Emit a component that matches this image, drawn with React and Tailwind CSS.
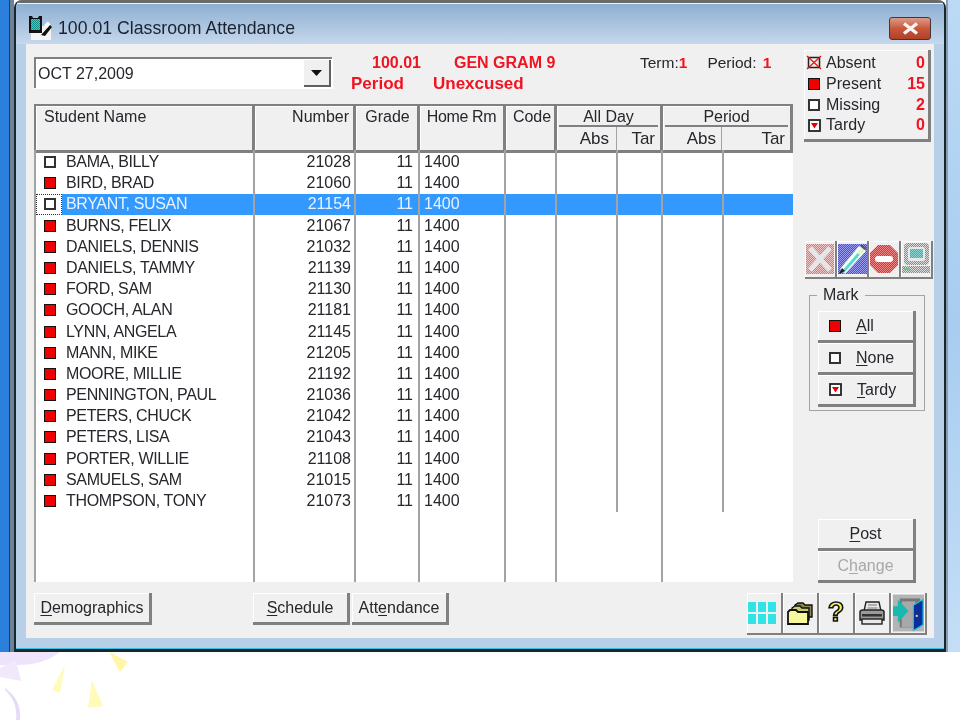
import React from "react";

const students = [
  ["BAMA, BILLY", "21028", "w"],
  ["BIRD, BRAD", "21060", "r"],
  ["BRYANT, SUSAN", "21154", "w"],
  ["BURNS, FELIX", "21067", "r"],
  ["DANIELS, DENNIS", "21032", "r"],
  ["DANIELS, TAMMY", "21139", "r"],
  ["FORD, SAM", "21130", "r"],
  ["GOOCH, ALAN", "21181", "r"],
  ["LYNN, ANGELA", "21145", "r"],
  ["MANN, MIKE", "21205", "r"],
  ["MOORE, MILLIE", "21192", "r"],
  ["PENNINGTON, PAUL", "21036", "r"],
  ["PETERS, CHUCK", "21042", "r"],
  ["PETERS, LISA", "21043", "r"],
  ["PORTER, WILLIE", "21108", "r"],
  ["SAMUELS, SAM", "21015", "r"],
  ["THOMPSON, TONY", "21073", "r"],
];

const COLS = "grid grid-cols-[221px_101px_64px_86px_51px_61px_45px_61px_69px]";
const LINE = "border-r-2 border-[#a3a3a3]";

function Present() {
  return <span className="block w-[12px] h-[12px] border border-[#111] bg-[#f00000]" />;
}
function Missing() {
  return <span className="block w-[12px] h-[12px] border-2 border-[#333] bg-white" />;
}
function Tardy() {
  return (
    <svg width="13" height="13" viewBox="0 0 13 13" className="block">
      <rect x="1" y="1" width="11" height="11" fill="#fff" stroke="#222" strokeWidth="1.8" />
      <path d="M3 4h7l-3.5 5.5z" fill="#e80000" />
    </svg>
  );
}
function Absent() {
  return (
    <svg width="16" height="17" viewBox="0 0 16 17" className="block">
      <rect x="2.5" y="3.5" width="11" height="10" fill="#f5e9e9" stroke="#222" strokeWidth="1.5" />
      <path d="M1 2l14 13M15 2L1 15" stroke="#e01010" strokeWidth="1.1" />
    </svg>
  );
}

function StudentRow({ name, num, mark, selected }) {
  const bg = selected ? "bg-[#3399ff] text-[#e8f3ff]" : "text-[#26262c]";
  return (
    <div className={`${COLS} ${selected ? "h-[20.19px] mt-[1px] leading-[20px]" : "h-[21.19px] leading-[22px]"}`}>
      <div className={`flex border-l-2 border-[#808080] ${LINE}`}>
        <div className={`w-[26px] flex items-center justify-center pl-[1px] ${selected ? "border border-dotted border-[#333]" : ""}`}>
          {mark === "r" ? <Present /> : <Missing />}
        </div>
        <div className={`flex-1 pl-[4px] tracking-[-0.35px] ${bg}`}>{name}</div>
      </div>
      <div className={`${LINE} text-right pr-[3px] ${bg}`}>{num}</div>
      <div className={`${LINE} text-right pr-[5px] ${bg}`}>11</div>
      <div className={`${LINE} pl-[4px] ${bg}`}>1400</div>
      <div className={`${LINE} ${bg}`} />
      <div className={`${LINE} ${bg}`} />
      <div className={`${LINE} ${bg}`} />
      <div className={`${LINE} ${bg}`} />
      <div className={`${selected ? bg : ""}`} />
    </div>
  );
}

const HEAD = "bg-[#f0f0f0] border-r-[3px] border-b-[3px] border-[#808080] shadow-[inset_1px_1px_0_#fff] leading-[22px]";

function Btn({ className = "", children }) {
  return (
    <div className={`flex items-center bg-[#f0f0f0] border-r-[3px] border-b-[3px] border-[#808080] shadow-[inset_1px_1px_0_#fff] ${className}`}>
      {children}
    </div>
  );
}

function IconBtn({ className = "", children }) {
  return (
    <div className={`flex items-center justify-center bg-[#f0f0f0] border-r-2 border-b-2 border-[#808080] shadow-[inset_1px_1px_0_#fff] ${className}`}>
      {children}
    </div>
  );
}

function MarkBtn({ icon, u, rest }) {
  return (
    <Btn className="h-[32px] pl-[11px] gap-[15px]">
      {icon}
      <span className="text-[#26262c] pt-[1px]"><span className="underline underline-offset-2">{u}</span>{rest}</span>
    </Btn>
  );
}

function Dither({ id, a, b }) {
  return (
    <pattern id={id} width="2" height="2" patternUnits="userSpaceOnUse">
      <rect width="2" height="2" fill={a} />
      <rect width="1" height="1" fill={b} />
      <rect x="1" y="1" width="1" height="1" fill={b} />
    </pattern>
  );
}

function ToolX() {
  return (
    <svg width="28" height="34" viewBox="0 0 28 34">
      <defs><Dither id="dx" a="#d47878" b="#f0c8c8" /></defs>
      <rect x="0" y="2" width="28" height="30" fill="url(#dx)" />
      <path d="M4 6l20 22M24 6L4 28" stroke="#e6e6e6" strokeWidth="5" />
    </svg>
  );
}
function ToolPen() {
  return (
    <svg width="29" height="34" viewBox="0 0 29 34">
      <defs><Dither id="dp" a="#4a50e0" b="#9a9cf0" /></defs>
      <rect x="0" y="2" width="29" height="30" fill="url(#dp)" />
      <path d="M2 27L21 4l7 5L7 32z" fill="#f2fff4" />
      <path d="M4 29L24 6l2 2L6 31z" fill="#52dcd0" />
      <path d="M19 11l4-5 3 2-4 5z" fill="#f4f4c0" />
      <path d="M1 32l3-6 3 3z" fill="#222" />
      <path d="M23 3l5 4" stroke="#555" strokeWidth="2" />
    </svg>
  );
}
function ToolStop() {
  return (
    <svg width="28" height="30" viewBox="0 0 28 30">
      <defs><Dither id="ds" a="#e03030" b="#f08888" /></defs>
      <path d="M8 1h12l8 8v12l-8 8H8l-8-8V9z" fill="url(#ds)" />
      <rect x="5" y="12" width="18" height="6" rx="3" fill="#fff" />
    </svg>
  );
}
function ToolMonitor() {
  return (
    <svg width="30" height="34" viewBox="0 0 30 34">
      <defs><Dither id="dm" a="#dcdcdc" b="#8a8a8a" /><Dither id="dn" a="#8fd4d4" b="#5aa0a8" /></defs>
      <rect x="3" y="1" width="25" height="22" rx="4" fill="url(#dm)" />
      <rect x="7" y="5" width="17" height="14" rx="2" fill="#e8e8e8" />
      <rect x="9" y="7" width="13" height="9" fill="url(#dn)" />
      <rect x="1" y="24" width="28" height="7" fill="url(#dm)" />
      <rect x="3" y="26" width="6" height="2" fill="#60c880" />
    </svg>
  );
}
function IconGrid() {
  const c = "w-[8px] h-[10px] bg-[#2fe3e6]";
  return (
    <div className="grid grid-cols-[8px_8px_8px] gap-x-[2px] gap-y-[2px] mr-[4px]">
      <div className={c} /><div className={c} /><div className={c} />
      <div className={c} /><div className={c} /><div className={c} />
    </div>
  );
}
function IconFolder() {
  return (
    <svg width="26" height="23" viewBox="0 0 26 23">
      <path d="M8 3l3-2h5l2 2h7v12H8z" fill="#8a8a50" stroke="#111" strokeWidth="1.4" />
      <path d="M5 6l3-2h5l2 2h7v12H5z" fill="#c8c870" stroke="#111" strokeWidth="1.4" />
      <path d="M1 10l2-2h6l2 2h10v12H1z" fill="#f8f89c" stroke="#111" strokeWidth="1.8" />
    </svg>
  );
}
function IconHelp() {
  return (
    <svg width="24" height="32" viewBox="0 0 24 32" fontFamily="'Liberation Sans',sans-serif" fontWeight="700">
      <text x="12" y="24" fontSize="27" textAnchor="middle" fill="#f5f060" stroke="#111" strokeWidth="1.6">?</text>
    </svg>
  );
}
function IconPrinter() {
  return (
    <svg width="26" height="24" viewBox="0 0 26 24">
      <path d="M7 1h13l2 9H5z" fill="#e8e8e8" stroke="#222" strokeWidth="1.4" />
      <path d="M9 4h9M8.5 7h10" stroke="#777" />
      <path d="M1 11q0-2 3-2h18q3 0 3 2v8H1z" fill="#9a9a9a" stroke="#222" strokeWidth="1.5" />
      <rect x="3" y="13" width="20" height="2.5" fill="#333" />
      <rect x="3" y="18" width="20" height="5" fill="#e8e8e8" stroke="#222" strokeWidth="1.4" />
    </svg>
  );
}
function IconExit() {
  return (
    <svg width="31" height="38" viewBox="0 0 32 38">
      <rect width="32" height="38" fill="#b4b4b4" />
      <rect x="7" y="4" width="21" height="30" fill="#777" />
      <rect x="9" y="7" width="14" height="27" fill="#a8a8a8" />
      <path d="M21 11l10-6v26l-10 6z" fill="#0a2f9a" stroke="#17c4e0" strokeWidth="1.2" />
      <rect x="23.5" y="21" width="2" height="2" fill="#ffe060" />
      <path d="M0 12h5V5l11 12L5 29v-7H0z" fill="#19b8b0" />
    </svg>
  );
}

function AppIcon() {
  return (
    <svg width="26" height="26" viewBox="0 0 26 26">
      <defs><Dither id="da" a="#0f8f88" b="#38d0c0" /></defs>
      <rect x="3" y="11" width="20" height="14" fill="#f4f4f4" />
      <path d="M1 1h3l1 2h5l1-2h3v17H1z" fill="#111" />
      <rect x="3" y="4" width="9" height="11" fill="url(#da)" />
      <path d="M13 20l9-10 2 2-7 9z" fill="#111" />
      <rect x="17" y="8" width="5" height="4" fill="#fff" transform="rotate(-45 19 10)" />
    </svg>
  );
}

export default function App() {
  return (
    <div className="w-[960px] h-[720px] overflow-hidden bg-white blur-[0.4px] font-['Liberation_Sans',Arial,sans-serif] text-[16px] text-[#26262c] leading-[20px]">
      <div className="flex h-[652px]">
        {/* desktop strip left */}
        <div className="flex w-[14px]">
          <div className="w-[9px] bg-[#2a80dc]" />
          <div className="w-[1px] bg-[#223a5c]" />
          <div className="w-[4px] bg-[#6e8296]" />
        </div>

        {/* window */}
        <div className="w-[932px] flex flex-col bg-[#b8cfe8] border-x-2 border-b-[3px] border-[#16282e] rounded-t-[8px] overflow-hidden shadow-[inset_0_-1px_0_#3cc0e0]">
          <div className="h-[4px] bg-[#6a6a6a] border-b border-[#eef2f6] mx-[-2px]" />
          <div className="flex items-center h-[40px] pt-[8px] pl-[12px] pr-[13px] bg-gradient-to-b from-[#8eafd2] to-[#c6d8ec]">
            <AppIcon />
            <span className="ml-[4px] text-[17.7px] text-[#1a2230]">100.01 Classroom Attendance</span>
            <div className="ml-auto w-[42px] h-[23px] rounded-[3px] border border-[#4a3038] bg-gradient-to-b from-[#dc9a88] via-[#c8583c] to-[#b04026] flex items-center justify-center">
              <svg width="19" height="13" viewBox="0 0 19 13"><path d="M3 1.5l13 10M16 1.5l-13 10" stroke="#f6f6f6" strokeWidth="3.4" /></svg>
            </div>
          </div>

          {/* client */}
          <div className="mx-[10px] h-[594px] bg-[#f0f0f0] flex flex-col">
            <div className="flex h-[540px] pt-[6px]">
              <div className="w-[778px] pl-[8px] pt-[7px] flex flex-col">
                <div className="flex h-[31px]">
                  <div className="w-[298px] flex items-center justify-between border-t-2 border-l-2 border-[#808080] bg-white shadow-[1px_1px_0_#fff] pl-[2px] pr-[1px]">
                    <span>OCT 27,2009</span>
                    <div className="w-[27px] h-[27px] bg-[#f0f0f0] border-r-2 border-b-2 border-[#606060] flex items-center justify-center">
                      <svg width="11" height="6" viewBox="0 0 11 6"><path d="M0 0h11L5.5 6z" fill="#111" /></svg>
                    </div>
                  </div>
                  <div className="ml-[19px] w-[289px] grid grid-cols-[82px_1fr] font-bold text-[#f01423] leading-[21px] mt-[-5px] h-[42px]">
                    <div className="pl-[21px]">100.01</div>
                    <div className="pl-[21px]">GEN GRAM 9</div>
                    <div className="text-[17px]">Period</div>
                    <div className="text-[17px]">Unexcused</div>
                  </div>
                  <div className="flex mt-[-5px] leading-[21px] text-[15.5px]">
                    <span>Term:<b className="text-[#f01423]">1</b></span>
                    <span className="ml-[20px]">Period: <b className="text-[#f01423] ml-[2px]">1</b></span>
                  </div>
                </div>

                {/* table */}
                <div className="mt-[16px] w-[759px] h-[478px] flex flex-col bg-white">
                  <div className={`${COLS} h-[46px] border-t-2 border-[#808080]`}>
                    <div className={`${HEAD} border-l-2 pl-[8px]`}>Student Name</div>
                    <div className={`${HEAD} text-right pr-[4px]`}>Number</div>
                    <div className={`${HEAD} text-center pl-[2px]`}>Grade</div>
                    <div className={`${HEAD} text-center tracking-[-0.35px]`}>Home Rm</div>
                    <div className={`${HEAD} text-center pl-[4px]`}>Code</div>
                    <div className={`${HEAD} col-span-2 flex flex-col`}>
                      <div className="h-[21px] border-b-2 border-[#808080] text-center mx-[2px]">All Day</div>
                      <div className="flex flex-1 leading-[23px] text-[17px]">
                        <div className="w-[60px] text-right pr-[7px] border-r border-[#a3a3a3]">Abs</div>
                        <div className="flex-1 text-right pr-[5px]">Tar</div>
                      </div>
                    </div>
                    <div className={`${HEAD} col-span-2 flex flex-col`}>
                      <div className="h-[21px] border-b-2 border-[#808080] text-center mx-[2px]">Period</div>
                      <div className="flex flex-1 leading-[23px] text-[17px]">
                        <div className="w-[59px] text-right pr-[5px] border-r border-[#a3a3a3]">Abs</div>
                        <div className="flex-1 text-right pr-[5px]">Tar</div>
                      </div>
                    </div>
                  </div>
                  <div className={`${COLS} h-[1px]`}>
                    <div className={`border-l-2 border-[#808080] ${LINE}`} />
                    <div className={LINE} /><div className={LINE} /><div className={LINE} /><div className={LINE} />
                    <div className={LINE} /><div className={LINE} /><div className={LINE} /><div />
                  </div>
                  {students.map((s, i) => (
                    <StudentRow key={s[0]} name={s[0]} num={s[1]} mark={s[2]} selected={i === 2} />
                  ))}
                  <div className={`${COLS} flex-1`}>
                    <div className={`border-l-2 border-[#808080] ${LINE}`} />
                    <div className={LINE} /><div className={LINE} /><div className={LINE} /><div className={LINE} />
                    <div className={`${LINE} col-span-2`} />
                    <div className="col-span-2" />
                  </div>
                </div>
              </div>

              {/* right column */}
              <div className="w-[127px] flex flex-col">
                <div className="h-[92px] bg-[#f0f0f0] border-r-[3px] border-b-[3px] border-[#808080] shadow-[inset_1px_1px_0_#fff] pt-[2px] pl-[3px] pr-[3px]">
                  {[
                    [<Absent />, "Absent", "0", "-ml-[1px] w-[20px]"],
                    [<Present />, "Present", "15", "ml-[1px] w-[18px]"],
                    [<Missing />, "Missing", "2", "ml-[1px] w-[18px]"],
                    [<Tardy />, "Tardy", "0", "ml-[1px] w-[18px]"],
                  ].map(([ic, t, n, m], i) => (
                    <div key={t} className={`flex items-center ${i === 3 ? "h-[20px]" : "h-[21px]"}`}>
                      <div className={m}>{ic}</div>
                      <span>{t}</span>
                      <b className="ml-auto text-[#f01423]">{n}</b>
                    </div>
                  ))}
                </div>

                <div className="mt-[99px] flex h-[38px] ml-[1px] w-[128px]">
                  <IconBtn className="w-[32px] h-[38px]"><ToolX /></IconBtn>
                  <IconBtn className="w-[32px] h-[38px]"><ToolPen /></IconBtn>
                  <IconBtn className="w-[32px] h-[38px]"><ToolStop /></IconBtn>
                  <IconBtn className="w-[32px] h-[38px]"><ToolMonitor /></IconBtn>
                </div>

                <div className="relative mt-[16px] ml-[5px] w-[116px] h-[116px] border border-[#a3a3a3] pt-[15px] pl-[8px]">
                  <span className="absolute top-[-11px] left-[7px] bg-[#f0f0f0] px-[6px] leading-[20px]">Mark</span>
                  <div className="w-[98px] flex flex-col">
                    <MarkBtn icon={<Present />} u="A" rest="ll" />
                    <MarkBtn icon={<Missing />} u="N" rest="one" />
                    <MarkBtn icon={<Tardy />} u="T" rest="ardy" />
                  </div>
                </div>

                <div className="mt-[108px] ml-[14px] w-[98px] flex flex-col">
                  <Btn className="h-[32px] justify-center"><span className="pt-[1px]"><span className="underline underline-offset-2">P</span>ost</span></Btn>
                  <Btn className="h-[32px] justify-center text-[#a8a8a8]"><span className="pt-[1px]">C<span className="underline underline-offset-2">h</span>ange</span></Btn>
                </div>
              </div>
            </div>

            {/* bottom bar */}
            <div className="flex items-start h-[54px] pl-[8px] pt-[9px]">
              <Btn className="w-[118px] h-[32px] justify-center"><span className="pt-[1px] pl-[1px]"><span className="underline underline-offset-2">D</span>emographics</span></Btn>
              <Btn className="ml-[101px] w-[97px] h-[32px] justify-center"><span className="pt-[1px]"><span className="underline underline-offset-2">S</span>chedule</span></Btn>
              <Btn className="ml-[2px] w-[97px] h-[32px] justify-center"><span className="pt-[1px]">Att<span className="underline underline-offset-2">e</span>ndance</span></Btn>
              <div className="ml-[298px] flex h-[42px]">
                <IconBtn className="w-[36px] h-[42px]"><IconGrid /></IconBtn>
                <IconBtn className="w-[36px] h-[42px]"><IconFolder /></IconBtn>
                <IconBtn className="w-[36px] h-[42px]"><IconHelp /></IconBtn>
                <IconBtn className="w-[36px] h-[42px]"><IconPrinter /></IconBtn>
                <IconBtn className="w-[36px] h-[42px]"><IconExit /></IconBtn>
              </div>
            </div>
          </div>
        </div>

        {/* desktop strip right */}
        <div className="flex-1 bg-gradient-to-b from-[#bcdaf4] via-[#a8cdf0] to-[#c4def6] border-l-2 border-[#8a9cae]" />
      </div>

      {/* slide background below */}
      <svg width="960" height="68" viewBox="0 652 960 68" className="block">
        <path d="M0 652h60q-18 14-46 13H0z" fill="#eee3fb" />
        <path d="M0 668l16-8 5 21-21-4z" fill="#f1e8fc" />
        <path d="M5 688q17 12 15 32h-4q2-18-11-30z" fill="#e6dcf7" />
        <path d="M65 665L52 690l8 3z" fill="#fffbb8" />
        <path d="M92 680l-4 28 15-2z" fill="#fffbb8" />
        <path d="M110 652l18 10-8 10-9-16z" fill="#fff6a8" />
      </svg>
    </div>
  );
}
